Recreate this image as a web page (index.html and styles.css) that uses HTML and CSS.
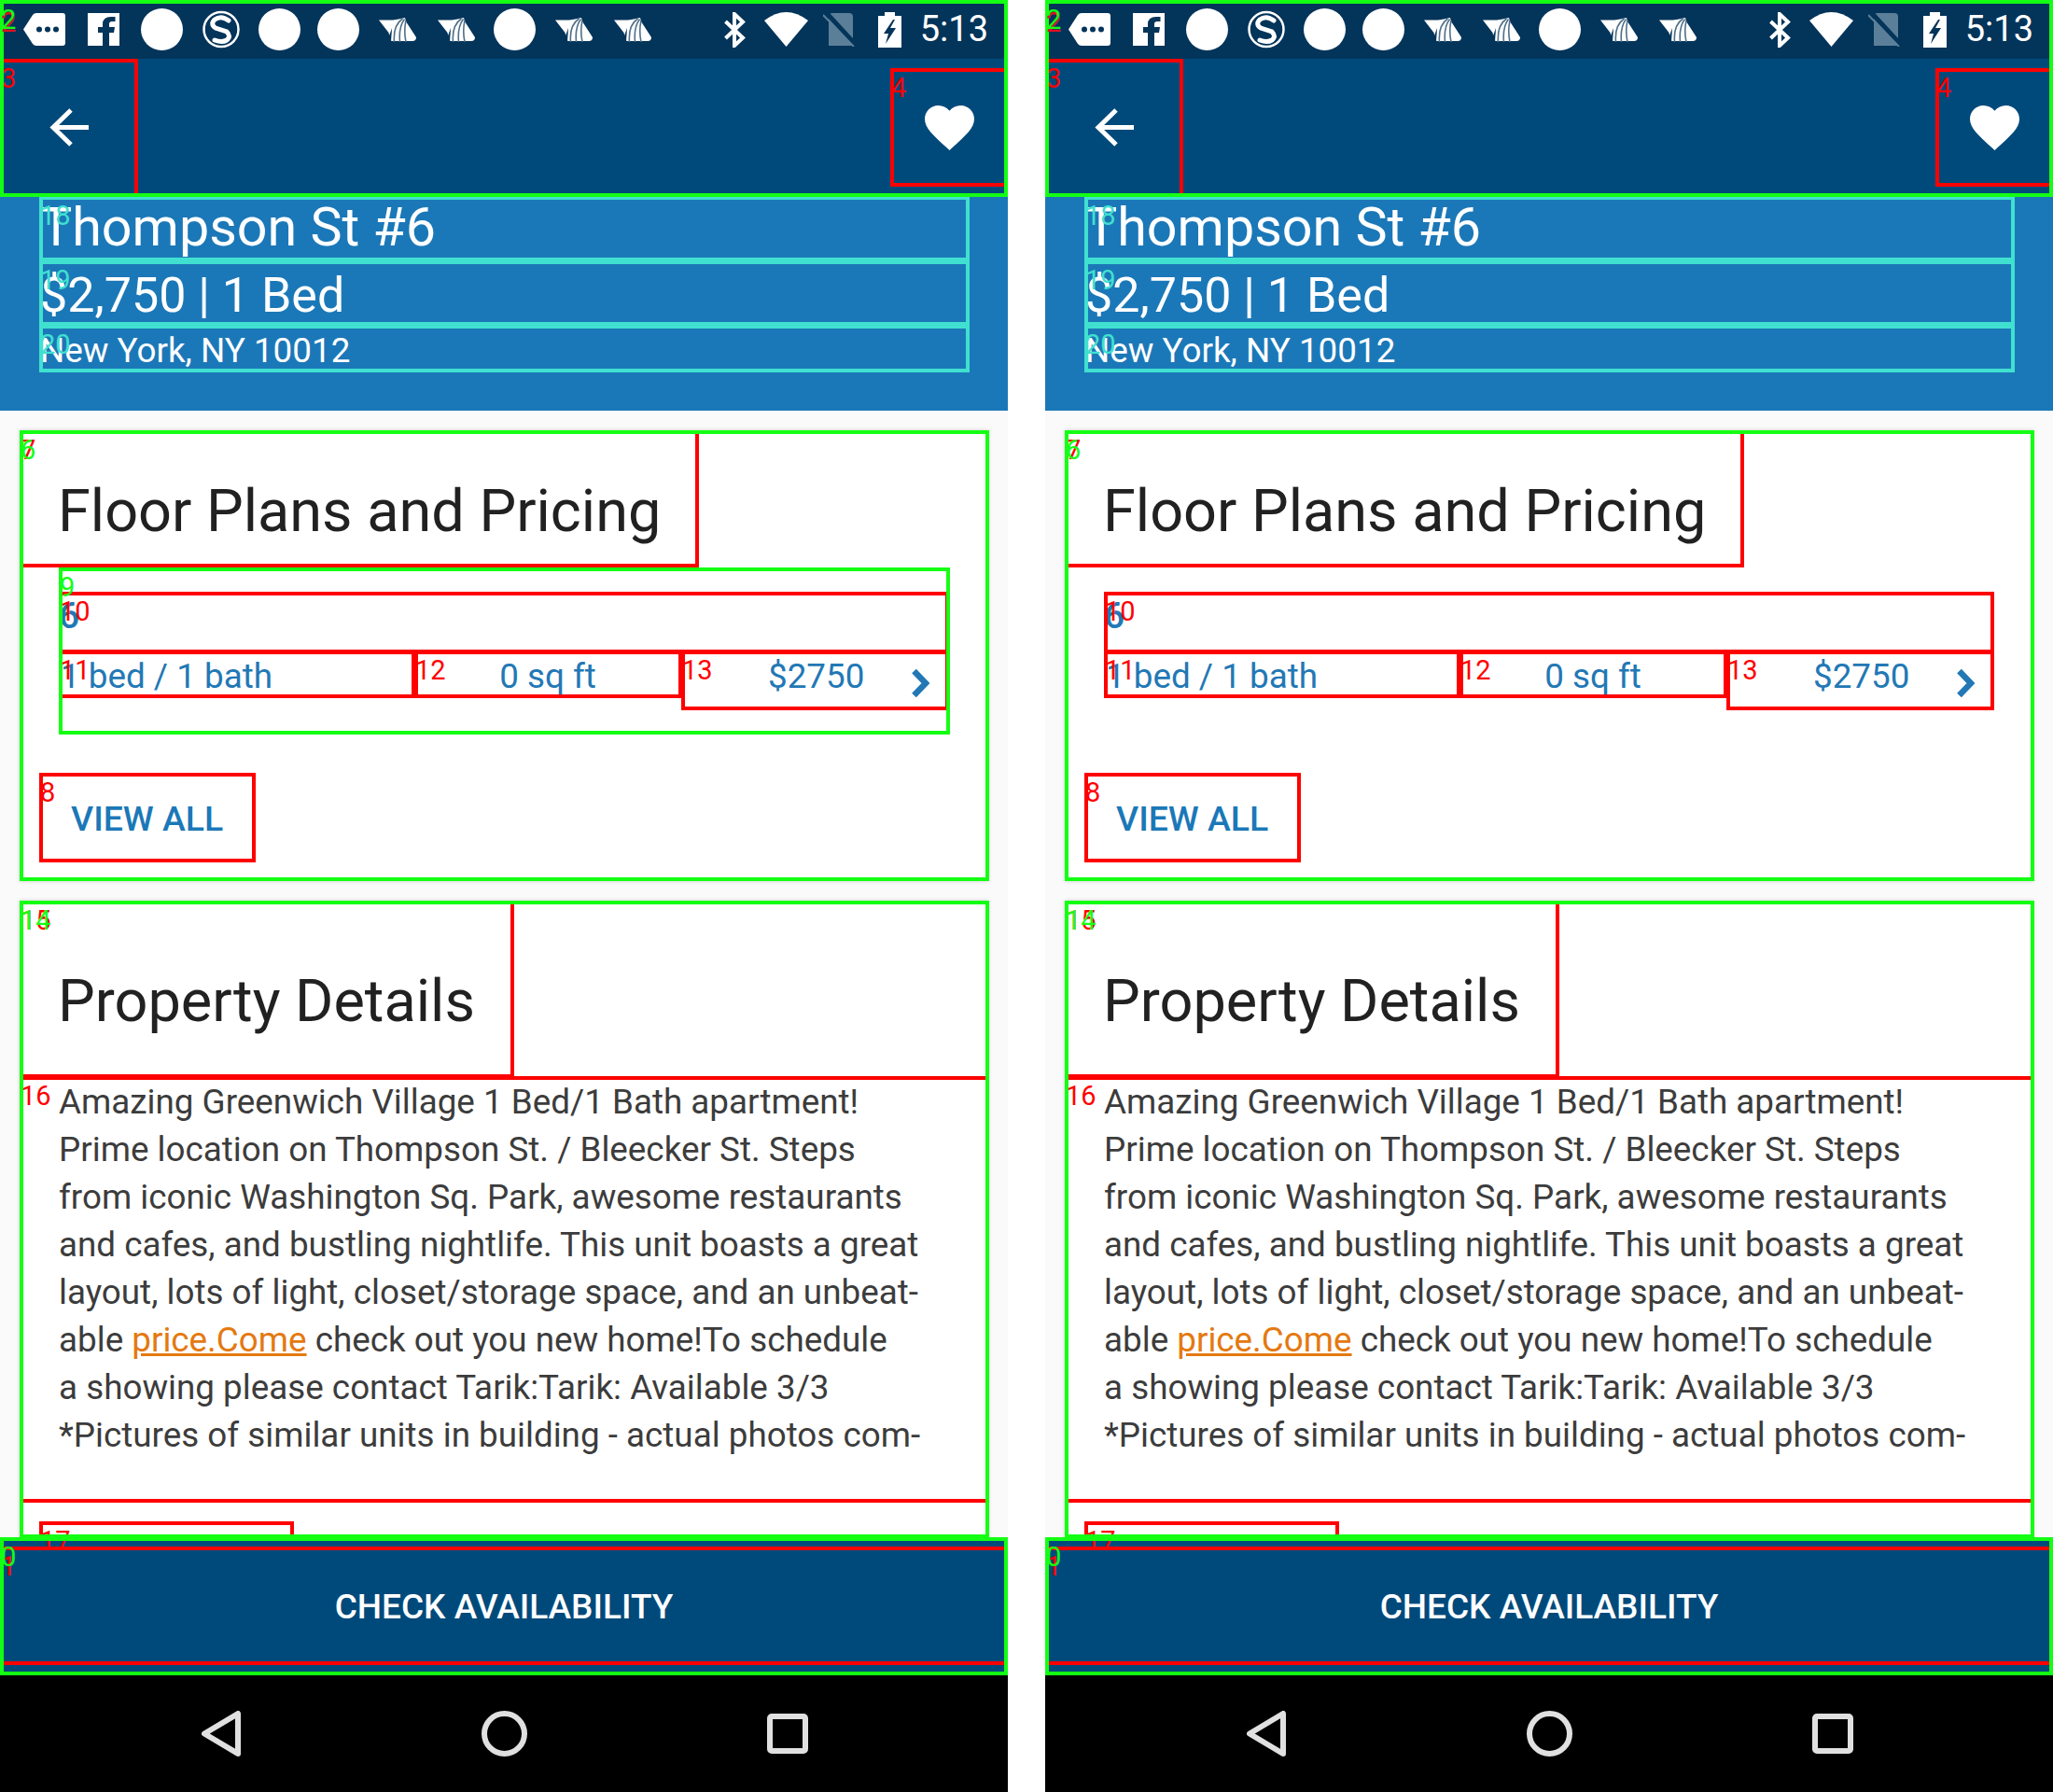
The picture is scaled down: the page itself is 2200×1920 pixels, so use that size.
FILE: index.html
```html
<!DOCTYPE html>
<html>
<head>
<title>Thompson St #6</title>
<meta charset="utf-8" />
<link rel="stylesheet" href="styles.css">
</head>
<body>

<svg class="sprite" xmlns="http://www.w3.org/2000/svg">
  <symbol id="i-tag" viewBox="0 0 45 35">
    <path fill="#fff" d="M0 17.5 L10 2 Q11.5 0 14 0 H42 Q45 0 45 3 V32 Q45 35 42 35 H14 Q11.5 35 10 33 Z"/>
    <circle cx="17" cy="17.5" r="3" fill="#03345a"/><circle cx="26" cy="17.5" r="3" fill="#03345a"/><circle cx="35" cy="17.5" r="3" fill="#03345a"/>
  </symbol>
  <symbol id="i-fb" viewBox="0 0 34 35">
    <path fill="#fff" d="M0 0 H34 V35 H0 Z"/>
    <path fill="#03345a" d="M23 35 V21 H28 L29 15 H23 V11.500 Q23 9 26 9 H29.500 V4 H25 Q16 4 16 12 V15 H11 V21 H16 V35 Z"/>
  </symbol>
  <symbol id="i-skype" viewBox="0 0 40 41">
    <circle cx="20" cy="20.500" r="18.500" fill="none" stroke="#fff" stroke-width="2.500"/>
    <path fill="none" stroke="#fff" stroke-width="5" stroke-linecap="round" d="M28 11 Q20 5 13 10 Q8 15 14 19 L26 23 Q31 28 26 32 Q21 35 13 32"/>
  </symbol>
  <symbol id="i-wing" viewBox="0 0 40 26">
    <path fill="#fff" d="M0 2.500 H15 Q21 1.500 28 0 L29 4 L40 21 Q40 25 36 25 H14 Q12 25 11.500 20 L10.500 16 Z"/>
    <path fill="none" stroke="#4f6f88" stroke-width="1.600" d="M25.500 1 Q15 8 16.500 26 M27.500 1.500 Q21 10 22.500 26 M29 3 Q26.500 14 29 26"/>
    <path fill="#03345a" d="M9 25 L14 11 L13 26 Z"/>
  </symbol>
  <symbol id="i-bt" viewBox="0 0 23 38">
    <path fill="none" stroke="#fff" stroke-width="4" d="M1.500 10 L20 27.500 L11 36 V2 L20 10.500 L1.500 28"/>
  </symbol>
  <symbol id="i-wifi" viewBox="0 0 47 37">
    <path fill="#fff" d="M0 9 Q23.500 -9 47 9 L23.500 37 Z"/>
  </symbol>
  <symbol id="i-sim" viewBox="0 0 35 37">
    <path fill="#5c7f99" d="M6 5 Q6 1 10 1 H28 Q32 1 32 5 V36 H6 Z"/>
    <path fill="none" stroke="#03345a" stroke-width="5" d="M1 -2 L35 35"/>
    <path fill="none" stroke="#5c7f99" stroke-width="2" d="M0 3 L33 37"/>
  </symbol>
  <symbol id="i-battery" viewBox="0 0 25 38">
    <path fill="#fff" d="M7 0 H18 V4 H25 V38 H0 V4 H7 Z"/>
    <path fill="#03345a" d="M16 8 L6 23 H11 L8 34 L19 17 H13 L18 8 Z"/>
  </symbol>
  <symbol id="i-back" viewBox="0 0 42 41">
    <path fill="none" stroke="#fff" stroke-width="5" d="M42 20.500 H4 M23 2 L4 20.500 L23 39"/>
  </symbol>
  <symbol id="i-heart" viewBox="0 0 53 48">
    <path fill="#fff" d="M26.500 48 L23 44.700 C9 32 0 24 0 14.500 C0 6.500 6.300 0 14.500 0 C19 0 23.600 2.100 26.500 5.700 C29.400 2.100 34 0 38.500 0 C46.700 0 53 6.500 53 14.500 C53 24 44 32 30 44.700 Z"/>
  </symbol>
  <symbol id="i-chevron" viewBox="0 0 19 30">
    <path fill="none" stroke="#2278b5" stroke-width="6.500" d="M2.500 2 L15 15 L2.500 28"/>
  </symbol>
  <symbol id="i-nav-back" viewBox="0 0 42 49">
    <path fill="none" stroke="#e0e0e0" stroke-width="6" stroke-linejoin="round" d="M39 3 V46 L3 24.500 Z"/>
  </symbol>
  <symbol id="i-nav-home" viewBox="0 0 49 49">
    <circle cx="24.500" cy="24.500" r="21.500" fill="none" stroke="#e0e0e0" stroke-width="6"/>
  </symbol>
  <symbol id="i-nav-recent" viewBox="0 0 44 43">
    <rect x="3" y="3" width="38" height="37" rx="2" fill="none" stroke="#e0e0e0" stroke-width="6"/>
  </symbol>
</svg>

<div class="pair">

<div class="screen">
  <div class="status">
    <div class="notifs">
      <span class="slot"><svg class="ic-tag"><use href="#i-tag"/></svg></span>
      <span class="slot"><svg class="ic-fb"><use href="#i-fb"/></svg></span>
      <span class="slot"><span class="dot"></span></span>
      <span class="slot"><svg class="ic-skype"><use href="#i-skype"/></svg></span>
      <span class="slot"><span class="dot"></span></span>
      <span class="slot"><span class="dot"></span></span>
      <span class="slot"><svg class="ic-wing"><use href="#i-wing"/></svg></span>
      <span class="slot"><svg class="ic-wing"><use href="#i-wing"/></svg></span>
      <span class="slot"><span class="dot"></span></span>
      <span class="slot"><svg class="ic-wing"><use href="#i-wing"/></svg></span>
      <span class="slot"><svg class="ic-wing"><use href="#i-wing"/></svg></span>
    </div>
    <div class="sys">
      <svg class="ic-bt"><use href="#i-bt"/></svg>
      <svg class="ic-wifi"><use href="#i-wifi"/></svg>
      <svg class="ic-sim"><use href="#i-sim"/></svg>
      <svg class="ic-battery"><use href="#i-battery"/></svg>
      <span class="clock">5:13</span>
    </div>
  </div>
  <div class="toolbar">
    <svg class="ic-back"><use href="#i-back"/></svg>
    <svg class="ic-heart"><use href="#i-heart"/></svg>
  </div>
  <div class="hero">
    <div class="hero-title">Thompson St #6</div>
    <div class="hero-price">$2,750 | 1 Bed</div>
    <div class="hero-addr">New York, NY 10012</div>
  </div>
  <div class="content">
    <div class="card card-plans">
      <h2 class="card-title">Floor Plans and Pricing</h2>
      <div class="plans">
        <div class="plans-count">6</div>
        <div class="plan-row">
          <span class="plan-beds">1 bed / 1 bath</span>
          <span class="plan-size">0 sq ft</span>
          <span class="plan-price">$2750</span>
          <svg class="ic-chevron"><use href="#i-chevron"/></svg>
        </div>
      </div>
      <div class="view-all">VIEW ALL</div>
    </div>
    <div class="card card-details">
      <h2 class="card-title">Property Details</h2>
      <p class="details">Amazing Greenwich Village 1 Bed/1 Bath apartment!<br>Prime location on Thompson St. / Bleecker St. Steps<br>from iconic Washington Sq. Park, awesome restaurants<br>and cafes, and bustling nightlife. This unit boasts a great<br>layout, lots of light, closet/storage space, and an unbeat-<br>able <a href="#">price.Come</a> check out you new home!To schedule<br>a showing please contact Tarik:Tarik: Available 3/3<br>*Pictures of similar units in building - actual photos com-</p>
    </div>
  </div>
  <div class="cta">CHECK AVAILABILITY</div>
  <div class="navbar">
    <svg class="ic-nav-back"><use href="#i-nav-back"/></svg>
    <svg class="ic-nav-home"><use href="#i-nav-home"/></svg>
    <svg class="ic-nav-recent"><use href="#i-nav-recent"/></svg>
  </div>

  <div class="box red b3"><span>3</span></div>
  <div class="box red b4"><span>4</span></div>
  <div class="box red b7"><span>7</span></div>
  <div class="box red b10"><span>10</span></div>
  <div class="box red b11"><span>11</span></div>
  <div class="box red b12"><span>12</span></div>
  <div class="box red b13"><span>13</span></div>
  <div class="box red b8"><span>8</span></div>
  <div class="box red b15"><span>15</span></div>
  <div class="box red b16"><span>16</span></div>
  <div class="box red b17"><span>17</span></div>
  <div class="box red b1"><span>1</span></div>
  <div class="box teal b18"><span>18</span></div>
  <div class="box teal b19"><span>19</span></div>
  <div class="box teal b20"><span>20</span></div>
  <div class="box green b2"><span class="under">2</span><span>2</span></div>
  <div class="box green b6"><span>6</span></div>
  <div class="box green b9"><span>9</span></div>
  <div class="box green b14"><span>14</span></div>
  <div class="box green b0"><span>0</span></div>
</div>

<div class="screen">
  <div class="status">
    <div class="notifs">
      <span class="slot"><svg class="ic-tag"><use href="#i-tag"/></svg></span>
      <span class="slot"><svg class="ic-fb"><use href="#i-fb"/></svg></span>
      <span class="slot"><span class="dot"></span></span>
      <span class="slot"><svg class="ic-skype"><use href="#i-skype"/></svg></span>
      <span class="slot"><span class="dot"></span></span>
      <span class="slot"><span class="dot"></span></span>
      <span class="slot"><svg class="ic-wing"><use href="#i-wing"/></svg></span>
      <span class="slot"><svg class="ic-wing"><use href="#i-wing"/></svg></span>
      <span class="slot"><span class="dot"></span></span>
      <span class="slot"><svg class="ic-wing"><use href="#i-wing"/></svg></span>
      <span class="slot"><svg class="ic-wing"><use href="#i-wing"/></svg></span>
    </div>
    <div class="sys">
      <svg class="ic-bt"><use href="#i-bt"/></svg>
      <svg class="ic-wifi"><use href="#i-wifi"/></svg>
      <svg class="ic-sim"><use href="#i-sim"/></svg>
      <svg class="ic-battery"><use href="#i-battery"/></svg>
      <span class="clock">5:13</span>
    </div>
  </div>
  <div class="toolbar">
    <svg class="ic-back"><use href="#i-back"/></svg>
    <svg class="ic-heart"><use href="#i-heart"/></svg>
  </div>
  <div class="hero">
    <div class="hero-title">Thompson St #6</div>
    <div class="hero-price">$2,750 | 1 Bed</div>
    <div class="hero-addr">New York, NY 10012</div>
  </div>
  <div class="content">
    <div class="card card-plans">
      <h2 class="card-title">Floor Plans and Pricing</h2>
      <div class="plans">
        <div class="plans-count">6</div>
        <div class="plan-row">
          <span class="plan-beds">1 bed / 1 bath</span>
          <span class="plan-size">0 sq ft</span>
          <span class="plan-price">$2750</span>
          <svg class="ic-chevron"><use href="#i-chevron"/></svg>
        </div>
      </div>
      <div class="view-all">VIEW ALL</div>
    </div>
    <div class="card card-details">
      <h2 class="card-title">Property Details</h2>
      <p class="details">Amazing Greenwich Village 1 Bed/1 Bath apartment!<br>Prime location on Thompson St. / Bleecker St. Steps<br>from iconic Washington Sq. Park, awesome restaurants<br>and cafes, and bustling nightlife. This unit boasts a great<br>layout, lots of light, closet/storage space, and an unbeat-<br>able <a href="#">price.Come</a> check out you new home!To schedule<br>a showing please contact Tarik:Tarik: Available 3/3<br>*Pictures of similar units in building - actual photos com-</p>
    </div>
  </div>
  <div class="cta">CHECK AVAILABILITY</div>
  <div class="navbar">
    <svg class="ic-nav-back"><use href="#i-nav-back"/></svg>
    <svg class="ic-nav-home"><use href="#i-nav-home"/></svg>
    <svg class="ic-nav-recent"><use href="#i-nav-recent"/></svg>
  </div>

  <div class="box red b3"><span>3</span></div>
  <div class="box red b4"><span>4</span></div>
  <div class="box red b7"><span>7</span></div>
  <div class="box red b10"><span>10</span></div>
  <div class="box red b11"><span>11</span></div>
  <div class="box red b12"><span>12</span></div>
  <div class="box red b13"><span>13</span></div>
  <div class="box red b8"><span>8</span></div>
  <div class="box red b15"><span>15</span></div>
  <div class="box red b16"><span>16</span></div>
  <div class="box red b17"><span>17</span></div>
  <div class="box red b1"><span>1</span></div>
  <div class="box teal b18"><span>18</span></div>
  <div class="box teal b19"><span>19</span></div>
  <div class="box teal b20"><span>20</span></div>
  <div class="box green b2"><span class="under">2</span><span>2</span></div>
  <div class="box green b6"><span>6</span></div>
  <div class="box green b14"><span>14</span></div>
  <div class="box green b0"><span>0</span></div>
</div>

</div>
</body>
</html>
```

FILE: styles.css
```css
body {
  margin: 0;
  background: #fff;
  font-family: 'Roboto', sans-serif;
}
h2, p {
  margin: 0;
}
.sprite {
  display: none;
}
.pair {
  display: flex;
  gap: 40px;
}
.screen {
  position: relative;
  width: 1080px;
  height: 1920px;
  flex: none;
  display: flex;
  flex-direction: column;
  overflow: hidden;
  background: #fafafa;
}

/* status bar */
.status {
  height: 63px;
  flex: none;
  display: flex;
  align-items: center;
  justify-content: space-between;
  padding: 0 21px 0 16px;
  background: #03345a;
  color: #fff;
}
.notifs {
  display: flex;
  align-items: center;
}
.slot {
  width: 63px;
  display: flex;
  justify-content: center;
  align-items: center;
}
.dot {
  width: 45px;
  height: 45px;
  border-radius: 50%;
  background: #fff;
}
.ic-tag { width: 45px; height: 35px; }
.ic-fb { width: 34px; height: 35px; }
.ic-skype { width: 40px; height: 41px; }
.ic-wing { width: 40px; height: 26px; margin-top: 1px; }
.sys {
  display: flex;
  align-items: center;
}
.ic-bt { width: 23px; height: 38px; }
.ic-wifi { width: 47px; height: 37px; margin-left: 20px; }
.ic-sim { width: 35px; height: 37px; margin-left: 16px; }
.ic-battery { width: 25px; height: 38px; margin-left: 24px; }
.clock {
  margin-left: 20px;
  font-size: 38px;
  line-height: 65px;
}

/* toolbar */
.toolbar {
  height: 147px;
  flex: none;
  display: flex;
  align-items: center;
  justify-content: space-between;
  padding: 0 36px 0 53px;
  background: #004a7b;
}
.ic-back { width: 42px; height: 41px; }
.ic-heart { width: 53px; height: 48px; }

/* header block */
.hero {
  height: 230px;
  flex: none;
  box-sizing: border-box;
  padding-left: 43px;
  background: #1b78b8;
  color: #fff;
}
.hero-title {
  font-size: 57.4px;
  line-height: 67px;
  height: 69px;
}
.hero-price {
  font-size: 52px;
  line-height: 75px;
  height: 70px;
}
.hero-addr {
  font-size: 36.8px;
  line-height: 54px;
}

/* cards */
.content {
  flex: 1;
  min-height: 0;
  overflow: hidden;
  padding: 21px 21px 0;
}
.card {
  background: #fff;
  box-shadow: 0 0 4px rgba(0, 0, 0, 0.2);
}
.card-plans {
  height: 483px;
  margin-bottom: 21px;
}
.card-details {
  height: 700px;
}
.card-title {
  font-size: 63px;
  font-weight: 400;
  line-height: 74px;
  color: #212121;
  padding-left: 41px;
}
.card-plans .card-title {
  padding-top: 50px;
  height: 96px;
}
.card-details .card-title {
  padding-top: 71px;
  height: 118px;
}
.plans {
  margin-left: 42px;
  width: 954px;
  color: #2278b5;
  font-size: 36.8px;
  line-height: 46px;
}
.plans-count {
  margin-top: 30px;
  font-size: 39px;
  font-weight: 500;
}
.plan-row {
  display: flex;
  margin-top: 19px;
}
.plan-beds {
  width: 381px;
  padding-left: 2px;
}
.plan-size {
  width: 282px;
  text-align: center;
}
.plan-price {
  margin-left: 95px;
}
.ic-chevron {
  width: 19px;
  height: 30px;
  margin: 15px 0 0 51px;
}
.view-all {
  width: 232px;
  height: 96px;
  box-sizing: border-box;
  margin: 80px 0 0 21px;
  padding-left: 34px;
  font-size: 37.4px;
  font-weight: 500;
  line-height: 98px;
  color: #1b78b8;
}
.details {
  margin-top: 1px;
  padding-left: 42px;
  font-size: 36.8px;
  line-height: 51px;
  color: #3c3c3c;
}
.details a {
  color: #e47911;
}

/* bottom */
.cta {
  height: 148px;
  flex: none;
  background: #004a7b;
  color: #fff;
  font-size: 37px;
  font-weight: 500;
  line-height: 150px;
  text-align: center;
}
.navbar {
  height: 125px;
  flex: none;
  position: relative;
  display: flex;
  align-items: center;
  justify-content: space-between;
  padding: 0 214px 0 216px;
  background: #000;
}
.ic-nav-back { width: 42px; height: 49px; }
.ic-nav-home { width: 49px; height: 49px; }
.ic-nav-recent { width: 44px; height: 43px; }

/* debug rectangles drawn over the screen */
.box {
  position: absolute;
  box-sizing: border-box;
  border: 4px solid;
}
.box span {
  position: absolute;
  top: 3px;
  left: -3px;
  font-size: 29px;
  line-height: 29px;
}
.red { border-color: #ff0000; color: #ff0000; }
.green { border-color: #14ff14; color: #14ff14; }
.teal { border-color: #40e0d0; color: #40e0d0; }
.box .under { color: #e01020; top: 6px; }

.b0 { left: 0; top: 1647px; width: 1080px; height: 148px; }
.b1 { left: 0; top: 1657px; width: 1080px; height: 127px; }
.b2 { left: 0; top: 0; width: 1080px; height: 211px; }
.b3 { left: 0; top: 63px; width: 148px; height: 148px; }
.b4 { left: 954px; top: 73px; width: 126px; height: 127px; }
.b6 { left: 21px; top: 461px; width: 1039px; height: 483px; }
.b7 { left: 21px; top: 461px; width: 728px; height: 147px; }
.b8 { left: 42px; top: 828px; width: 232px; height: 96px; }
.b9 { left: 63px; top: 608px; width: 955px; height: 179px; }
.b10 { left: 63px; top: 634px; width: 954px; height: 66px; }
.b11 { left: 63px; top: 697px; width: 382px; height: 51px; }
.b12 { left: 444px; top: 697px; width: 287px; height: 51px; }
.b13 { left: 730px; top: 697px; width: 287px; height: 64px; }
.b14 { left: 21px; top: 965px; width: 1039px; height: 683px; }
.b15 { left: 21px; top: 965px; width: 530px; height: 190px; }
.b16 { left: 21px; top: 1153px; width: 1039px; height: 457px; }
.b17 { left: 42px; top: 1630px; width: 273px; height: 18px; }
.b18 { left: 42px; top: 210px; width: 997px; height: 70px; }
.b19 { left: 42px; top: 279px; width: 997px; height: 70px; }
.b20 { left: 42px; top: 348px; width: 997px; height: 51px; }
```
